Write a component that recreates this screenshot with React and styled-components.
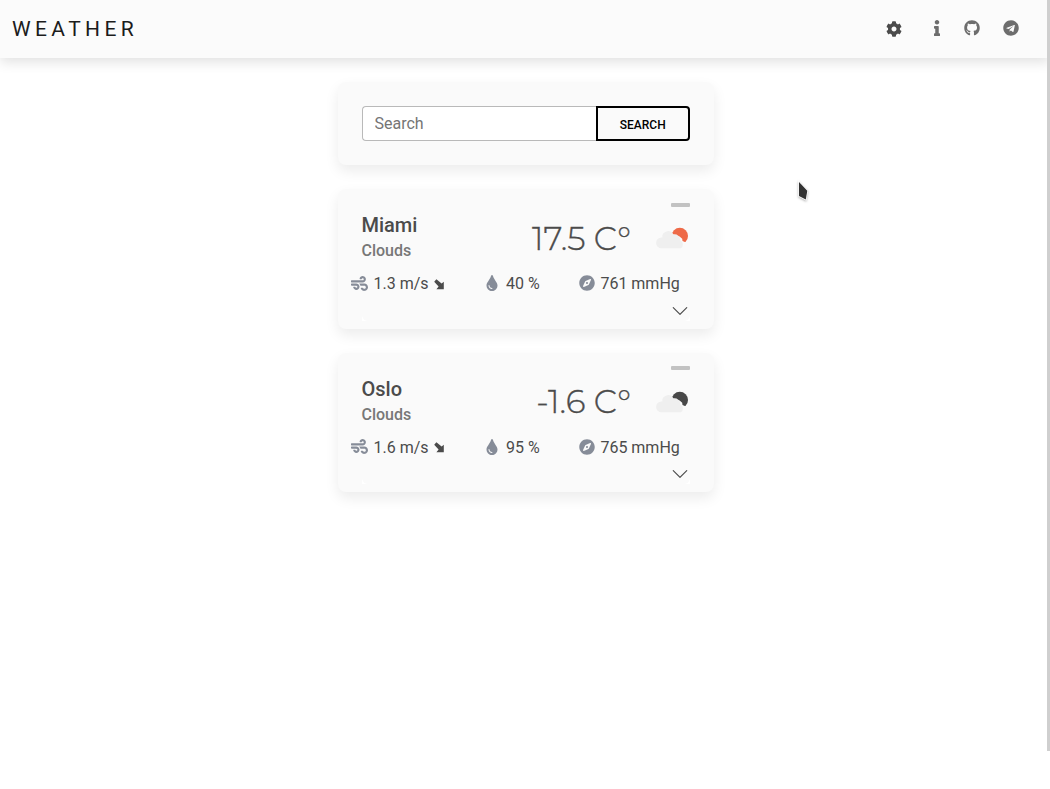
import React from 'react';
import styled, { createGlobalStyle } from 'styled-components';
import { FaCog, FaInfo, FaGithub, FaTelegram, FaWind, FaTint, FaCompass } from 'react-icons/fa';
import { BsChevronDown } from 'react-icons/bs';

const GlobalStyle = createGlobalStyle`
  * { box-sizing: border-box; }
  body {
    margin: 0;
    background: #fff;
    color: #4b4b4b;
    font-family: Roboto, "Liberation Sans", sans-serif;
    font-size: 16px;
    overflow: hidden;
  }
`;

const Page = styled.div`
  position: relative;
  height: 789px;
`;

const Header = styled.header`
  display: flex;
  align-items: center;
  justify-content: space-between;
  height: 58px;
  padding: 0 31px 0 12px;
  background: #fbfbfb;
  box-shadow: 0 4px 12px rgba(0, 0, 0, 0.12);
`;

const Brand = styled.h1`
  margin: 0;
  font-size: 21px;
  line-height: 24px;
  font-weight: 400;
  letter-spacing: 4.4px;
  color: #1c1c1c;
`;

const Nav = styled.nav`
  display: flex;
  align-items: center;
`;

const NavIcon = styled.span`
  display: flex;
  margin-left: ${(p) => p.$gap || 0}px;
  margin-bottom: ${(p) => p.$lift || 0}px;
  color: ${(p) => p.$color || '#6d6d6d'};
`;

const Main = styled.main`
  display: flex;
  flex-direction: column;
  gap: 24px;
  width: 376px;
  margin: 24px 0 0 338px;
`;

const Card = styled.section`
  border-radius: 8px;
  background: #fafafa;
  box-shadow: 0 6px 14px rgba(0, 0, 0, 0.08);
`;

const SearchCard = styled(Card)`
  display: flex;
  height: 83px;
  padding: 24px;
`;

const SearchInput = styled.input`
  width: 234px;
  height: 35px;
  padding: 0 12px;
  border: 1px solid #b9b9b9;
  border-right: 0;
  border-radius: 4px 0 0 4px;
  outline: 0;
  background: #fff;
  font: 400 16px Roboto, sans-serif;
  text-indent: -0.5px;
  &::placeholder { color: #757575; opacity: 1; }
`;

const SearchButton = styled.button`
  width: 94px;
  height: 35px;
  padding: 2px 0.5px 0 0;
  border: 2px solid #000;
  border-radius: 0 4px 4px 0;
  background: #fafafa;
  color: #000;
  font: 500 12px Roboto, sans-serif;
`;

const WeatherCard = styled(Card)`
  display: flex;
  flex-direction: column;
  height: 139.5px;
  padding: 13.9px 24px 0;
`;

const RemoveButton = styled.div`
  align-self: flex-end;
  width: 19px;
  height: 4px;
  margin-bottom: 0.3px;
  border-radius: 1px;
  background: #c2c2c2;
`;

const Summary = styled.div`
  display: flex;
  align-items: flex-start;
  height: 64px;
`;

const Place = styled.div`
  flex: 1;
  padding-top: 6px;
  margin-left: -0.5px;
`;

const City = styled.h2`
  margin: 0;
  font-size: 20px;
  line-height: 24px;
  font-weight: 500;
`;

const Condition = styled.div`
  margin-top: 4px;
  line-height: 19px;
  font-weight: 500;
  color: #777;
`;

const Temperature = styled.div`
  padding-top: 9.7px;
  font: 300 32.7px/42px Montserrat, Inter, sans-serif;
  -webkit-text-stroke: 0.35px #4b4b4b;
  white-space: pre;
`;

const Sky = styled.div`
  display: flex;
  margin: 19px 1px 0 25px;
`;

const Metrics = styled.div`
  display: flex;
  height: 26px;
  margin: 0 -13px;
  padding-left: 2px;
  align-items: center;
`;

const Metric = styled.div`
  display: flex;
  align-items: center;
  width: ${(p) => p.$width}px;
  line-height: 20px;
  white-space: nowrap;
  svg { color: #868c98; flex: none; }
`;

const Glyph = styled.span`
  display: flex;
  margin-bottom: 2px;
`;

const Value = styled.span`
  margin-left: ${(p) => p.$gap}px;
`;

const Direction = styled.span`
  display: flex;
  margin: 0 0 0 5px;
  svg { color: #4b4b4b; }
`;

const Fold = styled.div`
  height: 24px;
  margin-top: -0.3px;
  background: linear-gradient(#fafafa 50%, #fff 50%);
`;

const FoldFace = styled.div`
  display: flex;
  justify-content: flex-end;
  height: 24px;
  padding: 5px 1px 0 0;
  border-radius: 0 0 6px 6px;
  background: #fafafa;
`;

const ScrollThumb = styled.div`
  position: absolute;
  top: 0;
  right: 0;
  width: 3px;
  height: 751px;
  background: #cfcfcf;
`;

const Cursor = styled.svg`
  position: absolute;
  left: 794px;
  top: 178px;
  filter: drop-shadow(0 1px 1px rgba(0, 0, 0, 0.3));
`;

function CloudIcon({ disc }) {
  return (
    <svg width="33" height="24" viewBox="0 0 33 24">
      <circle cx="23.8" cy="10" r="8.2" fill={disc} />
      <path
        d="M5.5 23a5.6 5.6 0 0 1-.3-11.1l1.8-.3A6 6 0 0 1 15 5.6l2.1 2.7 2.2.9 1.2 1.6 2.3-.9 1.7 1.4 1.7 1.4.3 2.4 2.4 1 1.2 2.1v3h-5A5 5 0 0 1 25 23z"
        fill="#fafafa"
      />
      <path
        d="M5.5 22.3a5.4 5.4 0 0 1 0-10.8h.8a5.7 5.7 0 0 1 10.8-3.1 5.8 5.8 0 0 1 7.2 6.2 4.3 4.3 0 0 1 .5 7.7z"
        fill="#efefef"
      />
    </svg>
  );
}

function DirectionIcon() {
  return (
    <svg width="11" height="11" viewBox="0 0 11 11">
      <path d="M2.4.2 7.6 4.6 9.8 2.7V10.2H2.4L4.6 7.6.2 2.8z" fill="currentColor" />
    </svg>
  );
}

function Weather({ city, condition, temperature, disc, wind, humidity, pressure }) {
  return (
    <WeatherCard>
      <RemoveButton />
      <Summary>
        <Place>
          <City>{city}</City>
          <Condition>{condition}</Condition>
        </Place>
        <Temperature>{temperature}</Temperature>
        <Sky><CloudIcon disc={disc} /></Sky>
      </Summary>
      <Metrics>
        <Metric $width={133}>
          <Glyph><FaWind size={17} /></Glyph>
          <Value $gap={5.5}>{wind}</Value>
          <Direction><DirectionIcon /></Direction>
        </Metric>
        <Metric $width={94.5}>
          <Glyph><FaTint size={16} /></Glyph>
          <Value $gap={6}>{humidity}</Value>
        </Metric>
        <Metric $width={120}>
          <Glyph><FaCompass size={16} /></Glyph>
          <Value $gap={5.9}>{pressure}</Value>
        </Metric>
      </Metrics>
      <Fold>
        <FoldFace><BsChevronDown size={18} /></FoldFace>
      </Fold>
    </WeatherCard>
  );
}

export default function App() {
  return (
    <Page>
      <GlobalStyle />
      <Header>
        <Brand>WEATHER</Brand>
        <Nav>
          <NavIcon $color="#4b4b4b"><FaCog size={16} /></NavIcon>
          <NavIcon $gap={27} $lift={2}><FaInfo size={16} /></NavIcon>
          <NavIcon $gap={18.5} $lift={2}><FaGithub size={16} /></NavIcon>
          <NavIcon $gap={23.5} $lift={2}><FaTelegram size={16} /></NavIcon>
        </Nav>
      </Header>
      <Main>
        <SearchCard>
          <SearchInput placeholder="Search" />
          <SearchButton>SEARCH</SearchButton>
        </SearchCard>
        <Weather
          city="Miami"
          condition="Clouds"
          temperature="17.5 C°"
          disc="#ee6a48"
          wind="1.3 m/s"
          humidity="40 %"
          pressure="761 mmHg"
        />
        <Weather
          city="Oslo"
          condition="Clouds"
          temperature="-1.6 C°"
          disc="#484848"
          wind="1.6 m/s"
          humidity="95 %"
          pressure="765 mmHg"
        />
      </Main>
      <ScrollThumb />
      <Cursor width="20" height="28" viewBox="0 0 20 28">
        <path d="M5 4 13.3 12.8 11.8 21.5 5 18z" fill="#333" stroke="#fff" strokeWidth="1.5" paintOrder="stroke" />
      </Cursor>
    </Page>
  );
}
